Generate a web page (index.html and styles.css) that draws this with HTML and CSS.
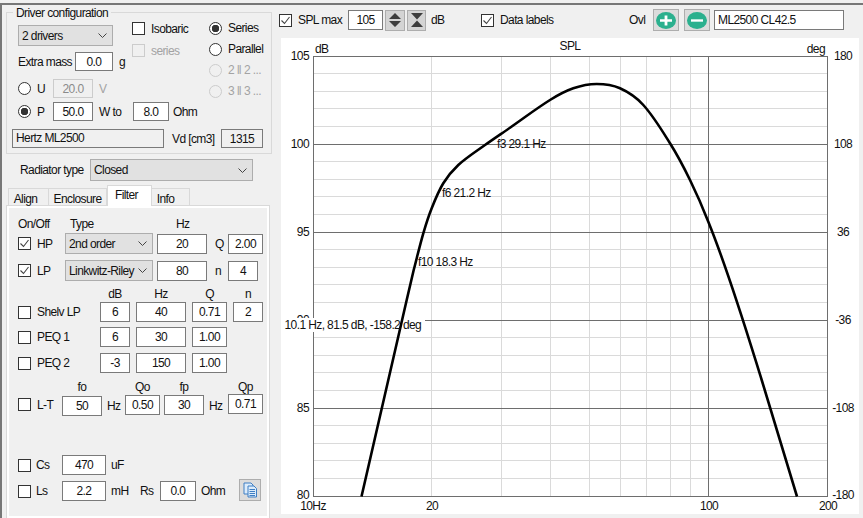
FILE: index.html
```html
<!DOCTYPE html>
<html lang="en">
<head>
<meta charset="utf-8">
<title>Driver configuration</title>
<link rel="stylesheet" href="styles.css">
</head>
<body>
<div class="app">
  <aside class="left">
    <section class="group">
      <div class="group-title">Driver configuration</div>
      <div class="group-top">
        <div class="col-a">
          <div class="select sel-drivers"><span>2 drivers</span><svg class="chev" viewBox="0 0 9 5"><path d="M.5.5l4 4 4-4"/></svg></div>
          <div class="row h19 mt6"><span class="lbl w57">Extra mass</span><input class="inp w38" value="0.0"><span class="lbl ml6">g</span></div>
          <div class="row h19 mt8"><span class="radio"></span><span class="lbl ml6 w16">U</span><input class="inp w40 off" value="20.0" disabled><span class="lbl ml6 dim">V</span></div>
        </div>
        <div class="col-b">
          <div class="row h13"><span class="cb"></span><span class="lbl ml6">Isobaric</span></div>
          <div class="row h13 mt9"><span class="cb off"></span><span class="lbl ml6 dim">series</span></div>
        </div>
        <div class="col-c">
          <div class="row h14"><span class="radio on"></span><span class="lbl ml6">Series</span></div>
          <div class="row h14"><span class="radio"></span><span class="lbl ml6">Parallel</span></div>
          <div class="row h14"><span class="radio off"></span><span class="lbl ml6 dim">2 ‖ 2 ...</span></div>
          <div class="row h14"><span class="radio off"></span><span class="lbl ml6 dim">3 ‖ 3 ...</span></div>
        </div>
      </div>
      <div class="row h19 mt4"><span class="radio on"></span><span class="lbl ml6 w16">P</span><input class="inp w40" value="50.0"><span class="lbl ml6 w34">W to</span><input class="inp w36" value="8.0"><span class="lbl ml4">Ohm</span></div>
      <div class="row h19 mt8 name-row"><div class="readout">Hertz ML2500</div><span class="lbl ml8 w49">Vd [cm3]</span><input class="inp w42 ro" value="1315" readonly></div>
    </section>

    <div class="row radiator"><span class="lbl w70">Radiator type</span><div class="select sel-radiator"><span>Closed</span><svg class="chev" viewBox="0 0 9 5"><path d="M.5.5l4 4 4-4"/></svg></div></div>

    <nav class="tabs">
      <span class="tab t-align">Align</span><span class="tab t-encl">Enclosure</span><span class="tab active t-filter">Filter</span><span class="tab t-info">Info</span>
    </nav>

    <section class="panel">
      <div class="row head h14 first"><span class="cell w52">On/Off</span><span class="cell w106">Type</span><span class="cell">Hz</span></div>

      <div class="row h21 mt2"><span class="cb checked"><svg viewBox="0 0 11 11"><path d="M1.5 5.5l3 3 5-6.5"/></svg></span><span class="lbl ml6 w28">HP</span><div class="select sel-filter"><span>2nd order</span><svg class="chev" viewBox="0 0 9 5"><path d="M.5.5l4 4 4-4"/></svg></div><input class="inp w50 ml4 h20" value="20"><span class="lbl ml8 w13">Q</span><input class="inp w35 h20" value="2.00"></div>
      <div class="row h21 mt6"><span class="cb checked"><svg viewBox="0 0 11 11"><path d="M1.5 5.5l3 3 5-6.5"/></svg></span><span class="lbl ml6 w28">LP</span><div class="select sel-filter"><span>Linkwitz-Riley</span><svg class="chev" viewBox="0 0 9 5"><path d="M.5.5l4 4 4-4"/></svg></div><input class="inp w50 ml4 h20" value="80"><span class="lbl ml8 w13">n</span><input class="inp w30 h20" value="4"></div>

      <div class="row h14 mt6"><span class="w82"></span><span class="cell w30 ctr">dB</span><span class="cell w50 ctr ml6">Hz</span><span class="cell w35 ctr ml6">Q</span><span class="cell w30 ctr ml6">n</span></div>
      <div class="row h20 mt1"><span class="cb"></span><span class="lbl ml6 w63">Shelv LP</span><input class="inp w30 h20" value="6"><input class="inp w50 h20 ml6" value="40"><input class="inp w35 h20 ml6" value="0.71"><input class="inp w30 h20 ml6" value="2"></div>
      <div class="row h20 mt5"><span class="cb"></span><span class="lbl ml6 w63">PEQ 1</span><input class="inp w30 h20" value="6"><input class="inp w50 h20 ml6" value="30"><input class="inp w35 h20 ml6" value="1.00"></div>
      <div class="row h20 mt6"><span class="cb"></span><span class="lbl ml6 w63">PEQ 2</span><input class="inp w30 h20" value="-3"><input class="inp w50 h20 ml6" value="150"><input class="inp w35 h20 ml6" value="1.00"></div>

      <div class="row h14 mt7"><span class="w44"></span><span class="cell w40 ctr">fo</span><span class="cell w23"></span><span class="cell w35 ctr">Qo</span><span class="cell w40 ctr ml4">fp</span><span class="cell w24"></span><span class="cell w35 ctr">Qp</span></div>
      <div class="row h22 lt-row"><span class="cb lt-cb"></span><span class="lbl ml6 w25 lt-lbl">L-T</span><input class="inp w40 h20 s2" value="50"><span class="lbl ml5 w18 s3">Hz</span><input class="inp w35 h20 s1" value="0.50"><input class="inp w40 h20 ml4 s1" value="30"><span class="lbl ml5 w19 s3">Hz</span><input class="inp w35 h20" value="0.71"></div>

      <div class="row h20 mt39"><span class="cb"></span><span class="lbl ml5 w26">Cs</span><input class="inp w44 h20" value="470"><span class="lbl ml5">uF</span></div>
      <div class="row h20 mt6"><span class="cb"></span><span class="lbl ml5 w26">Ls</span><input class="inp w44 h20" value="2.2"><span class="lbl ml5 w29">mH</span><span class="lbl w20">Rs</span><input class="inp w36 h20" value="0.0"><span class="lbl ml5 w38">Ohm</span>
        <button class="btn copy" type="button" aria-label="Copy"><svg viewBox="0 0 16 16"><path class="p1" d="M2 1h7l2 2v9H2z"/><path class="p2" d="M6 4h6l2.500 2.500V15H6z"/><path class="p3" d="M7.500 7.500h5.500M7.500 9.500h5.500M7.500 11.500h5.500M7.500 13.500h5.500"/></svg></button>
      </div>
    </section>
  </aside>

  <main class="right">
    <div class="toolbar">
      <span class="cb checked"><svg viewBox="0 0 11 11"><path d="M1.500 5.500l3 3 5-6.500"/></svg></span><span class="lbl ml6 w50">SPL max</span>
      <input class="inp w35 h20" value="105">
      <button class="btn arrows w20b" type="button" aria-label="Increase range"><svg viewBox="0 0 14 16"><path d="M7 1l6 6H1zM1 9h12l-6 6z"/></svg></button>
      <button class="btn arrows w19b" type="button" aria-label="Decrease range"><svg viewBox="0 0 14 16"><path d="M1 1h12L7 7.500zM7 8.500l6 6.500H1z"/></svg></button>
      <span class="lbl ml5 w50">dB</span>
      <span class="cb checked"><svg viewBox="0 0 11 11"><path d="M1.500 5.500l3 3 5-6.500"/></svg></span><span class="lbl ml6 w129">Data labels</span>
      <span class="lbl w24">Ovl</span>
      <button class="btn round" type="button" aria-label="Add overlay"><svg viewBox="0 0 20 20" preserveAspectRatio="none"><circle cx="10" cy="10" r="10"/><path d="M10 4v12M4 10h12"/></svg></button>
      <button class="btn round ml5" type="button" aria-label="Remove overlay"><svg viewBox="0 0 20 20" preserveAspectRatio="none"><circle cx="10" cy="10" r="10"/><path d="M4 10h12"/></svg></button>
      <input class="inp ovl" value="ML2500 CL42.5">
    </div>

    <svg class="chart" viewBox="281 38 578 476" role="img" aria-label="SPL chart">
      <g class="minor">
        <path d="M431.500 56v441M501.500 56v441M550.500 56v441M589.500 56v441M620.500 56v441M646.500 56v441M670.500 56v441M690.500 56v441"/>
        <path d="M314 73.500h513M314 91.500h513M314 108.500h513M314 126.500h513M314 161.500h513M314 179.500h513M314 196.500h513M314 214.500h513M314 249.500h513M314 267.500h513M314 284.500h513M314 302.500h513M314 337.500h513M314 355.500h513M314 372.500h513M314 390.500h513M314 425.500h513M314 443.500h513M314 460.500h513M314 478.500h513"/>
      </g>
      <g class="major">
        <path d="M708.500 56v441M314 144.500h513M314 232.500h513M314 320.500h513M314 408.500h513"/>
        <rect x="313.500" y="56.500" width="514" height="440"/>
      </g>
      <g class="ax">
        <text x="315" y="53">dB</text>
        <text x="570" y="50" class="mid">SPL</text>
        <text x="825" y="53" class="end">deg</text>
        <text x="309" y="60" class="end">105</text>
        <text x="309" y="148" class="end">100</text>
        <text x="309" y="236" class="end">95</text>
        <text x="309" y="324" class="end">90</text>
        <text x="309" y="412" class="end">85</text>
        <text x="309" y="499" class="end">80</text>
        <text x="843" y="60" class="mid">180</text>
        <text x="843" y="148" class="mid">108</text>
        <text x="843" y="236" class="mid">36</text>
        <text x="843" y="324" class="mid">-36</text>
        <text x="843" y="412" class="mid">-108</text>
        <text x="843" y="499" class="mid">-180</text>
        <text x="313" y="509.500" class="mid">10Hz</text>
        <text x="432" y="509.500" class="mid">20</text>
        <text x="709" y="509.500" class="mid">100</text>
        <text x="828" y="509.500" class="mid">200</text>
      </g>
      <rect class="tip" x="284" y="318" width="141" height="14"/>
      <path class="curve" d="M361.500 496.500L406.700 300L413.700 270C416.900 257.800 419.800 245.400 423.300 233.300C425.800 224.900 428.400 216.500 431.700 208.300C435.100 199.700 438.500 191.100 443.300 183.300C447.400 176.600 452.500 170.400 458.300 165C466.500 157.500 476 151.500 485 145C493.100 139.200 501.800 133.400 510 127.700C523.300 118.500 536.200 108.600 550 100C557.400 95.400 565.100 91.100 573.300 88.300C580.800 85.700 588.800 84 596.700 84C604.600 84 612.800 85.100 620 88.300C628.700 92.200 636.900 97.900 643.300 105C653.700 116.500 661.700 130 670 143.300C677.400 155.100 683.900 167.500 690 180C696.700 193.700 702.700 207.500 708.300 221.700C729.300 273.700 745.200 327 761.700 380L797 496.500"/>
      <g class="ax">
        <text x="497" y="148">f3 29.1 Hz</text>
        <text x="442" y="197">f6 21.2 Hz</text>
        <text x="418" y="266">f10 18.3 Hz</text>
        <text x="284.500" y="329">10.1 Hz, 81.5 dB, -158.2 deg</text>
      </g>
    </svg>
  </main>
</div>
</body>
</html>
```

FILE: styles.css
```css
* { box-sizing: border-box; }
html, body { margin: 0; padding: 0; }
body {
  width: 863px;
  height: 518px;
  overflow: hidden;
  background: #f0f0f0;
  padding-top: 3px;
  font: 12px "Liberation Sans", Arial, sans-serif;
  letter-spacing: -0.6px;
  color: #111;
}
.app {
  display: flex;
  height: 515px;
  border-top: 2px solid #777;
  border-left: 2px solid #777;
}
.left { width: 270px; padding: 7px 0 0 4px; flex: none; }
.right { flex: 1; }

/* generic */
.row { display: flex; align-items: center; white-space: nowrap; }
.lbl, .cell { display: block; flex: none; }
.ctr { text-align: center; }
.dim { color: #a3a3a3; }
.h13 { height: 13px; } .h14 { height: 14px; } .h19 { height: 19px; }
.h20 { height: 20px; } .h21 { height: 21px; } .h22 { height: 22px; }
.mt1 { margin-top: 1px; } .mt2 { margin-top: 2px; } .mt4 { margin-top: 4px; } .mt5 { margin-top: 5px; }
.mt6 { margin-top: 6px; } .mt7 { margin-top: 7px; } .mt8 { margin-top: 8px; } .mt9 { margin-top: 9px; } .mt39 { margin-top: 39px; }
.ml4 { margin-left: 4px; } .ml5 { margin-left: 5px; } .ml6 { margin-left: 6px; } .ml8 { margin-left: 8px; }
.w13 { width: 13px; } .w16 { width: 16px; } .w18 { width: 18px; } .w19 { width: 19px; } .w20 { width: 20px; }
.w23 { width: 23px; } .w24 { width: 24px; } .w25 { width: 25px; } .w26 { width: 26px; } .w28 { width: 28px; } .w29 { width: 29px; }
.w30 { width: 30px; } .w34 { width: 34px; } .w35 { width: 35px; } .w36 { width: 36px; } .w38 { width: 38px; }
.w40 { width: 40px; } .w42 { width: 42px; } .w44 { width: 44px; flex: none; } .w49 { width: 49px; } .w50 { width: 50px; } .w52 { width: 52px; }
.w57 { width: 57px; } .w63 { width: 63px; } .w70 { width: 70px; } .w82 { width: 82px; flex: none; } .w106 { width: 106px; } .w129 { width: 129px; }

/* controls */
.inp {
  flex: none;
  height: 19px;
  margin-top: 0;
  margin-bottom: 0;
  padding: 0 1px;
  border: 1px solid #7a7a7a;
  border-radius: 0;
  background: #fff;
  font: inherit;
  letter-spacing: inherit;
  color: #111;
  text-align: center;
  outline: none;
}
.inp.h20 { height: 20px; }
.inp.off { background: #f0f0f0; border-color: #ccc; color: #8a8a8a; }
.inp.ro { background: #f0f0f0; }
.cb {
  flex: none;
  display: block;
  width: 13px;
  height: 13px;
  border: 1px solid #333;
  background: #fff;
}
.cb.off { border-color: #ccc; background: #f0f0f0; }
.cb svg { display: block; width: 11px; height: 11px; fill: none; stroke: #444; stroke-width: 1.1; }
.radio {
  flex: none;
  display: block;
  width: 13px;
  height: 13px;
  border: 1px solid #333;
  border-radius: 50%;
  background: #fff;
}
.radio.on { background: radial-gradient(circle, #333 0 3.5px, #fff 4px); }
.radio.off { border-color: #ccc; background: #f0f0f0; }
.select {
  flex: none;
  display: flex;
  align-items: center;
  justify-content: space-between;
  height: 21px;
  padding: 0 5px 0 3px;
  border: 1px solid #adadad;
  background: #e1e1e1;
}
.chev { width: 9px; height: 5px; fill: none; stroke: #444; stroke-width: 1; }
.btn {
  flex: none;
  display: flex;
  align-items: center;
  justify-content: center;
  padding: 0;
  border: 1px solid #adadad;
  background: #dcdcdc;
}
.btn svg { display: block; }

/* driver group */
.group {
  position: relative;
  width: 266px;
  height: 142px;
  padding: 12px 0 0 11px;
  border: 1px solid #d9d9d9;
}
.group-title {
  position: absolute;
  left: 6px;
  top: -7px;
  padding: 0 3px;
  background: #f0f0f0;
}
.group-top { display: flex; height: 73px; }
.col-a { width: 114px; flex: none; }
.col-b { width: 77px; flex: none; margin-top: -3px; }
.col-c { display: flex; flex-direction: column; gap: 7px; margin-top: -4px; }
.sel-drivers { width: 95px; }
.name-row { margin-left: -6px; }
.readout {
  flex: none;
  width: 152px;
  height: 19px;
  padding-left: 3px;
  line-height: 17px;
  border: 1px solid #7a7a7a;
}

.radiator { margin: 5px 0 0 14px; height: 22px; }
.sel-radiator { width: 163px; height: 22px; }

/* tabs */
.tabs { display: flex; align-items: flex-end; height: 21px; margin-top: 4px; padding-left: 2px; position: relative; z-index: 1; }
.tab {
  height: 18px;
  padding-top: 2px;
  line-height: 16px;
  text-align: center;
  border: 1px solid #d9d9d9;
  border-bottom: 0;
}
.tab.active { height: 21px; background: #fff; line-height: 15px; padding-right: 6px; }
.t-align { width: 41px; padding-right: 6px; } .t-encl { width: 58px; border-left: 0; } .t-filter { width: 45px; } .t-info { width: 38px; border-left: 0; padding-right: 10px; }

.panel {
  width: 264px;
  height: 314px;
  margin-top: -1px;
  padding-left: 11px;
  border: 1px solid #d9d9d9;
  box-shadow: inset 0 0 0 2px #fff;
}
.head.first { margin-top: 11px; }
.sel-filter { width: 88px; }
.lt-row { align-items: flex-start; }
.lt-cb { margin-top: 4px; }
.lt-lbl { margin-top: 4px; }
.s1 { margin-top: 1px; }
.s2 { margin-top: 2px; }
.s3 { margin-top: 5px; }
.copy { width: 22px; height: 22px; align-self: flex-end; }
.copy svg { width: 16px; height: 16px; }
.copy .p1, .copy .p2 { fill: #dcecfb; stroke: #3f7fc4; stroke-width: 1; }
.copy .p3 { fill: none; stroke: #3f7fc4; stroke-width: 1; }

/* toolbar */
.toolbar { display: flex; align-items: center; height: 22px; margin-top: 4px; padding-left: 7px; white-space: nowrap; }
.arrows { height: 21px; margin-left: 2px; background: #d4d4d4; }
.w20b { width: 20px; } .w19b { width: 19px; }
.arrows svg { width: 14px; height: 16px; fill: #3d3d3d; }
.round { width: 26px; height: 22px; }
.round svg { width: 20px; height: 17px; }
.round circle { fill: #2bb08e; }
.round path { fill: none; stroke: #fff; stroke-width: 2.8; }
.ovl { width: 130px; height: 20px; margin-left: 4px; padding-left: 3px; text-align: left; }

/* chart */
.chart { display: block; width: 578px; height: 476px; margin: 7px 0 0 9px; background: #fff; }
.minor path { fill: none; stroke: #dadada; stroke-width: 1; }
.major path, .major rect { fill: none; stroke: #6e6e6e; stroke-width: 1; }
.ax text { font: 12px "Liberation Sans", Arial, sans-serif; letter-spacing: -0.6px; fill: #111; }
.ax .end { text-anchor: end; }
.ax .mid { text-anchor: middle; }
.tip { fill: #fff; }
.curve { fill: none; stroke: #000; stroke-width: 2.6; stroke-linejoin: round; }
```
